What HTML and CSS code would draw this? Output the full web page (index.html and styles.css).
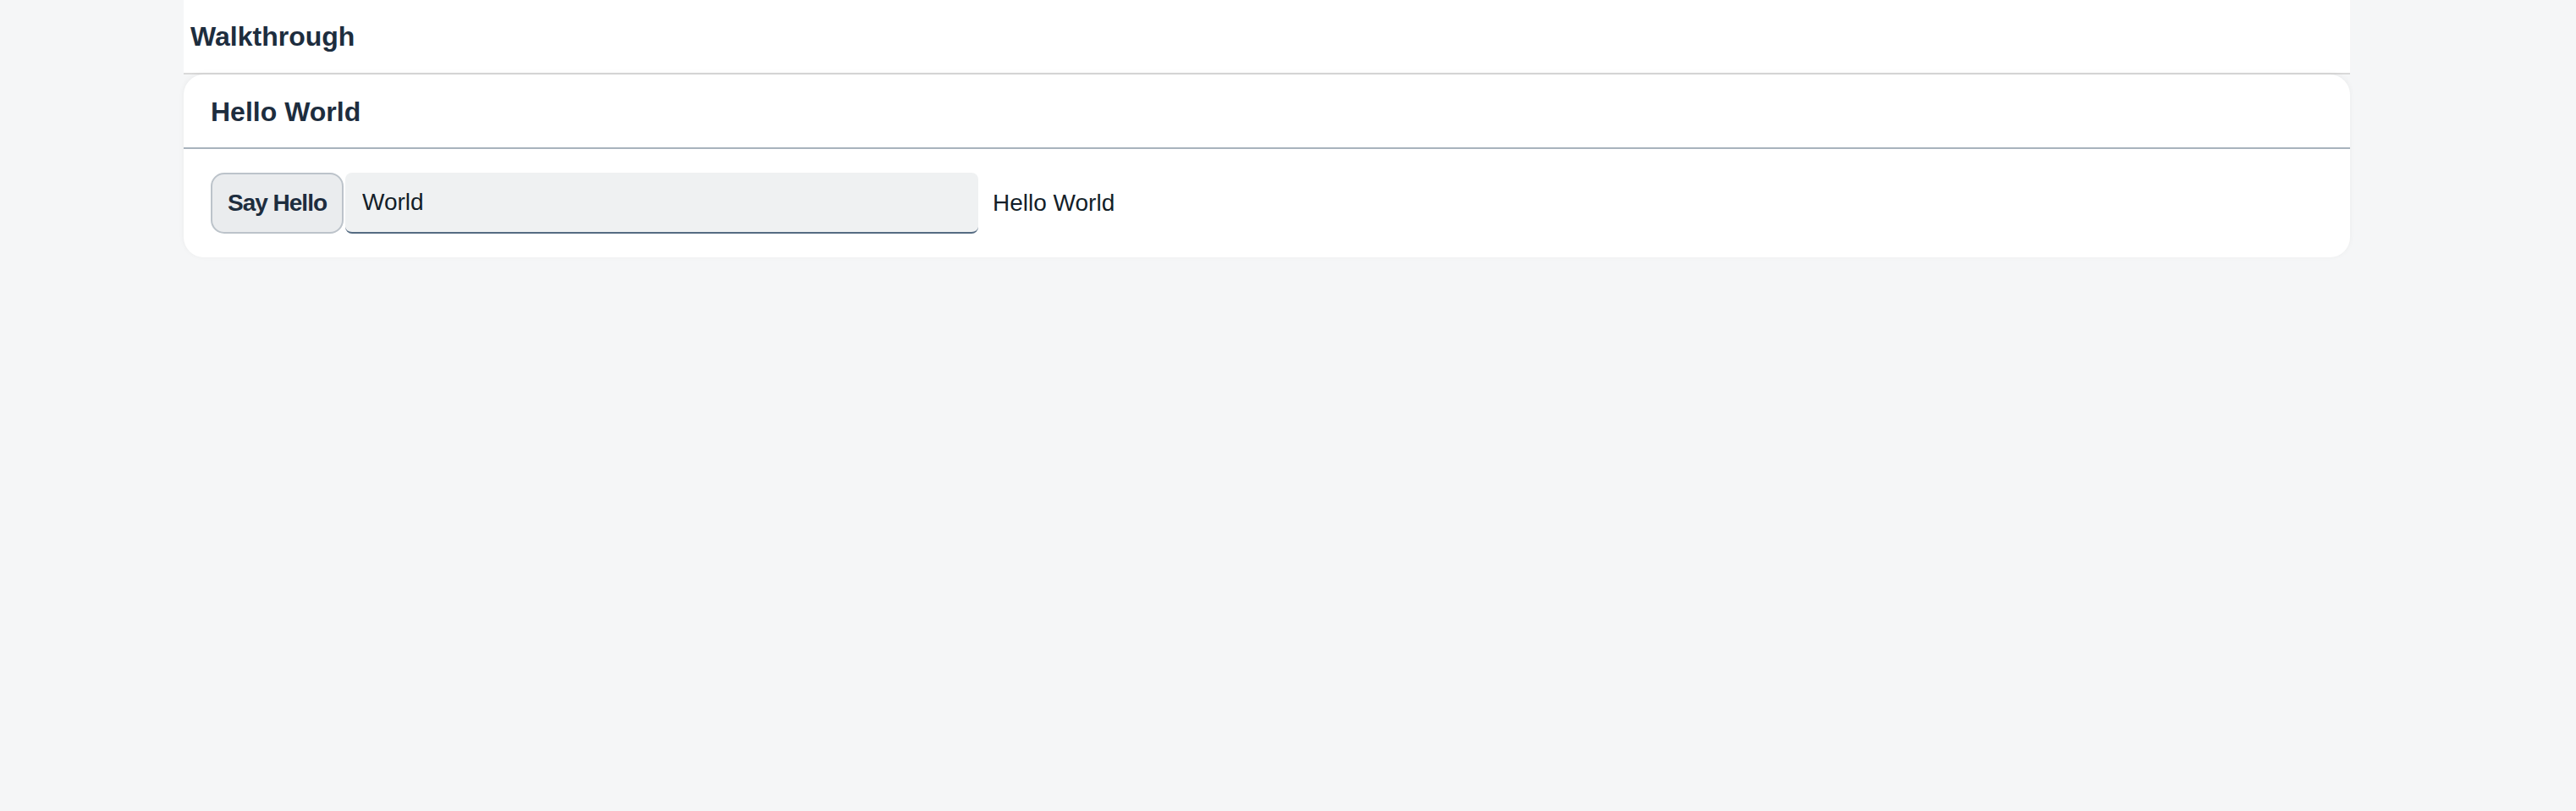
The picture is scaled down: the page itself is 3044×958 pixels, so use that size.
FILE: index.html
```html
<!DOCTYPE html>
<html lang="en">
<head>
    <meta charset="UTF-8">
    <meta name="viewport" content="width=device-width, initial-scale=1.0">
    <title>Walkthrough</title>
    <link rel="stylesheet" href="styles.css">
</head>
<body>
    <div class="app">
        <header class="app-header">
            <span class="app-title">Walkthrough</span>
        </header>

        <section class="panel">
            <div class="panel-header">
                <h2 class="panel-title">Hello World</h2>
            </div>
            <div class="panel-content">
                <button type="button" class="btn">Say Hello</button>
                <input type="text" class="input" value="World" />
                <span class="output">Hello World</span>
            </div>
        </section>
    </div>
</body>
</html>
```

FILE: styles.css
```css
* {
    box-sizing: border-box;
}

body {
    margin: 0;
    background-color: #f5f6f7;
    font-family: 'Liberation Sans', Arial, sans-serif;
    color: #1d2d3e;
}

.app {
    margin-left: 217px;
    width: 2560px;
    min-height: 100vh;
    background-color: #f5f6f7;
}

.app-header {
    height: 88px;
    display: flex;
    align-items: center;
    padding-left: 8px;
    background-color: #ffffff;
    border-bottom: 2px solid #d9d9d9;
}

.app-title {
    font-size: 32px;
    font-weight: 700;
}

.panel {
    background-color: #ffffff;
    border-radius: 24px;
    box-shadow: 0 -1px 6px 0 #0000000d;
    overflow: hidden;
}

.panel-header {
    height: 88px;
    display: flex;
    align-items: center;
    padding-left: 32px;
    padding-top: 2px;
    border-bottom: 2px solid #a8b3bd;
}

.panel-title {
    margin: 0;
    font-size: 32px;
    font-weight: 700;
}

.panel-content {
    display: flex;
    align-items: center;
    padding: 28px 32px;
}

.btn {
    width: 157px;
    height: 72px;
    padding: 0;
    font-family: inherit;
    font-size: 28px;
    font-weight: 700;
    letter-spacing: -1px;
    color: #1d2d3e;
    background-color: #eaecee;
    border: 2px solid #bcc3ca;
    border-radius: 16px;
    cursor: pointer;
}

.input {
    width: 748px;
    height: 72px;
    margin-left: 2px;
    padding: 0 20px;
    font-family: inherit;
    font-size: 28px;
    color: #131e29;
    background-color: #eff1f2;
    border: none;
    border-bottom: 2px solid #556b82;
    border-radius: 8px;
}

.output {
    margin-left: 17px;
    font-size: 28px;
    color: #131e29;
}
```
